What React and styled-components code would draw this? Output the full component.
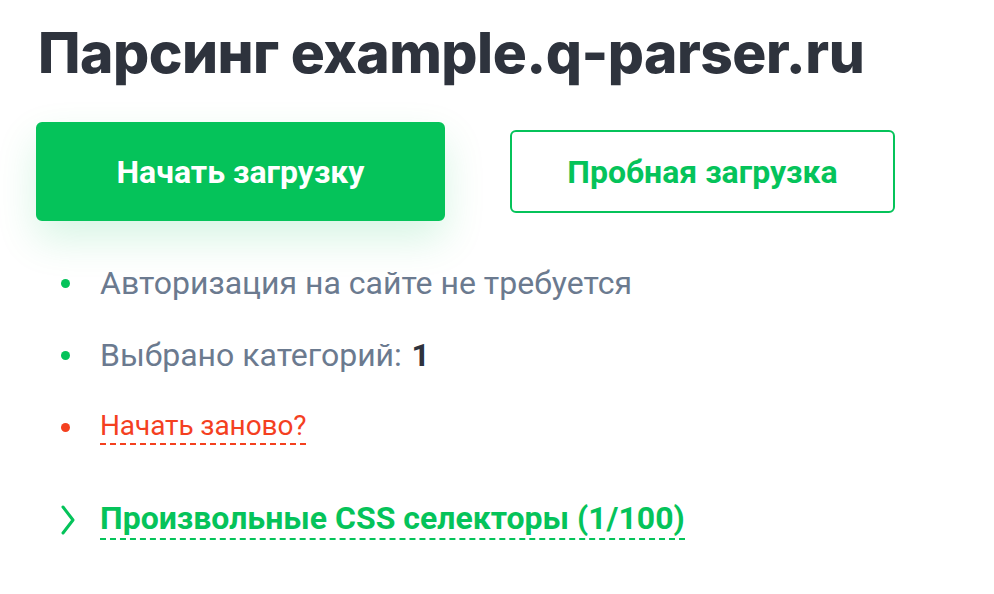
import React from "react";
import styled, { createGlobalStyle } from "styled-components";

const GlobalStyle = createGlobalStyle`
  body {
    margin: 0;
    background: #ffffff;
    font-family: Roboto, "Liberation Sans", sans-serif;
  }
`;

const Page = styled.div`
  padding: 17px 0 0 36px;
`;

const Title = styled.h1`
  margin: 0 0 0 2px;
  font-family: Inter, "Liberation Sans", sans-serif;
  font-weight: 800;
  font-size: 56.8px;
  line-height: 72px;
  letter-spacing: -0.5px;
  color: #2e333d;
`;

const Actions = styled.div`
  display: flex;
  align-items: center;
  gap: 65px;
  margin-top: 33px;
`;

const Button = styled.button`
  box-sizing: border-box;
  width: ${(p) => (p.$primary ? "409px" : "385px")};
  height: ${(p) => (p.$primary ? "99px" : "83px")};
  border-radius: 6px;
  border: 2px solid #05c35a;
  background: ${(p) => (p.$primary ? "#05c35a" : "#ffffff")};
  color: ${(p) => (p.$primary ? "#ffffff" : "#05c35a")};
  box-shadow: ${(p) => (p.$primary ? "0 18px 40px rgba(5, 195, 90, 0.16)" : "none")};
  font-family: Roboto, "Liberation Sans", sans-serif;
  font-weight: 700;
  font-size: 32px;
  cursor: pointer;
`;

const List = styled.ul`
  list-style: none;
  margin: 26px 0 0;
  padding: 0;
`;

const Item = styled.li`
  display: flex;
  align-items: center;
  height: 72px;
  font-size: 32px;
  color: #6b7a8f;

  &::before {
    content: "";
    width: 9px;
    height: 9px;
    border-radius: 50%;
    background: ${(p) => p.$dot};
    margin: 0 30px 0 25px;
    flex-shrink: 0;
  }
`;

const Strong = styled.b`
  color: #2e333d;
  margin-left: 0.3em;
`;

const Restart = styled.a`
  color: #f4401f;
  font-size: 28px;
  letter-spacing: -0.1px;
  text-decoration: none;
  border-bottom: 2px dashed #f4401f;
  padding-bottom: 1px;
  cursor: pointer;
`;

const Toggle = styled.div`
  display: flex;
  align-items: center;
  margin-top: 36px;
  padding-left: 24px;
  gap: 24px;
`;

const ToggleLabel = styled.a`
  color: #05c35a;
  font-weight: 700;
  font-size: 32px;
  border-bottom: 2px dashed #05c35a;
  padding-bottom: 1px;
  cursor: pointer;
`;

function Chevron() {
  return (
    <svg width="16" height="30" viewBox="0 0 16 30" fill="none">
      <path d="M3 2 L13 15 L3 28" stroke="#05c35a" strokeWidth="3" strokeLinecap="round" strokeLinejoin="round" />
    </svg>
  );
}

export default function App() {
  return (
    <Page>
      <GlobalStyle />
      <Title>Парсинг example.q-parser.ru</Title>
      <Actions>
        <Button $primary>Начать загрузку</Button>
        <Button>Пробная загрузка</Button>
      </Actions>
      <List>
        <Item $dot="#05c35a">Авторизация на сайте не требуется</Item>
        <Item $dot="#05c35a">
          Выбрано категорий:<Strong>1</Strong>
        </Item>
        <Item $dot="#f4401f">
          <Restart>Начать заново?</Restart>
        </Item>
      </List>
      <Toggle>
        <Chevron />
        <ToggleLabel>Произвольные CSS селекторы (1/100)</ToggleLabel>
      </Toggle>
    </Page>
  );
}
